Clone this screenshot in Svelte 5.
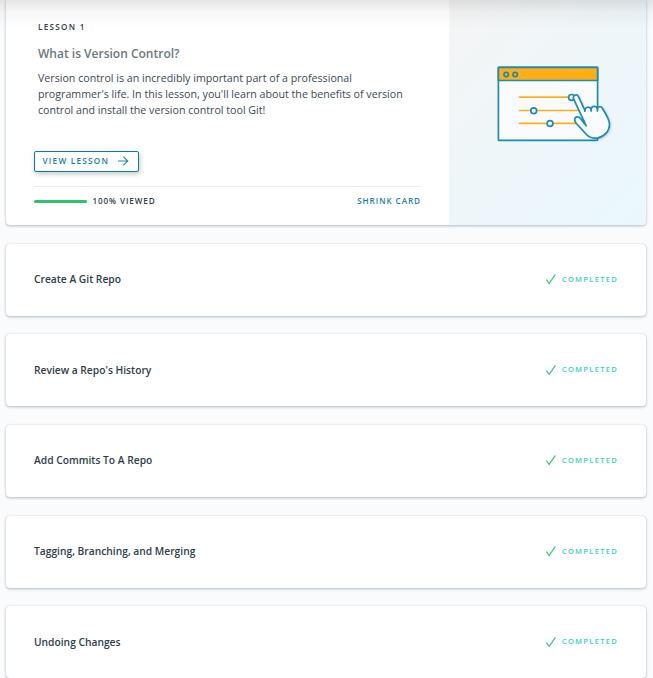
<script>
  const lessons = [
    'Create A Git Repo',
    "Review a Repo's History",
    'Add Commits To A Repo',
    'Tagging, Branching, and Merging',
    'Undoing Changes'
  ];
</script>

<main class="page">
  <article class="card lesson">
    <div class="content">
      <div class="eyebrow">LESSON 1</div>
      <h2>What is Version Control?</h2>
      <p>Version control is an incredibly important part of a professional programmer's life. In this lesson, you'll learn about the benefits of version control and install the version control tool Git!</p>
      <button class="view">
        <span>VIEW LESSON</span>
        <svg width="12" height="12" viewBox="0 0 12 12"><path d="M1 6H10.6M6.2 1.6L10.8 6L6.2 10.4" /></svg>
      </button>
      <footer>
        <span class="bar"></span>
        <span class="viewed">100% VIEWED</span>
        <span class="shrink">SHRINK CARD</span>
      </footer>
    </div>
    <div class="art">
      <svg width="140" height="95" viewBox="0 0 140 95" fill="none" stroke="#1d8caf" stroke-width="1.7" stroke-linecap="round" stroke-linejoin="round">
        <rect x="13.4" y="12.4" width="99.2" height="73" rx="1" fill="#fafbfd" />
        <path d="M13.4 25.5V12.4H112.6V25.5Z" fill="#ffae18" />
        <circle cx="21.2" cy="19.5" r="2.2" />
        <circle cx="30.2" cy="19.5" r="2.2" />
        <path d="M34.5 42.2H84M34.5 55.5H93M34.5 68.3H93" stroke="#ffae18" />
        <circle cx="48.7" cy="55.8" r="2.9" fill="#fafbfd" />
        <circle cx="65" cy="68.5" r="2.9" fill="#fafbfd" />
        <circle cx="86.5" cy="42.4" r="2.9" fill="#fafbfd" />
        <path class="hand" d="M101.2 70.8L96 64.2C94 61.5 91.5 61.2 90.2 63C89.4 64.4 90 66.5 91 68L101 79C104 82.2 108 83.7 112.5 83C119.5 81.6 124.5 76 124.5 69C124.2 63.5 120.5 58.5 117.4 53.2C115.8 50.8 112.5 51.3 112.4 54.2C111.7 50.5 106.5 50.5 106.2 54.3C104.8 51 100.2 51.8 99.9 55.3L93.6 41.8C92.2 38.7 87.8 39.8 88.4 43.3Z" fill="#fafbfd" />
        <path d="M99.9 55.3V56.2M106.2 54.3V56M112.4 54.2V56" />
      </svg>
    </div>
  </article>

  {#each lessons as title}
    <article class="card row">
      <h3>{title}</h3>
      <span class="status">
        <svg width="12" height="12" viewBox="0 0 12 12"><path d="M1.2 6.7L4.2 10.4L10.4 1.4" /></svg>
        <span class="label">COMPLETED</span>
      </span>
    </article>
  {/each}
  <div class="top-shade"></div>
</main>

<style>
  :global(body) { margin: 0; background: #fafbfd; }
  .page {
    position: relative;
    box-sizing: border-box;
    height: 678px;
    overflow: hidden;
    padding: 0 7px 0 6px;
    font-family: 'Open Sans', sans-serif;
    color: #2e3d49;
    display: flex;
    flex-direction: column;
    gap: 18.5px;
  }
  .card {
    flex: none;
    background: #fff;
    border-radius: 4px;
    box-shadow: 0 1px 3px rgba(46, 61, 73, 0.32), 0 0 1px rgba(46, 61, 73, 0.25);
  }
  .lesson {
    display: flex;
    height: 225px;
    border-radius: 0 0 4px 4px;
    overflow: hidden;
  }
  .content {
    box-sizing: border-box;
    width: 443px;
    padding: 20px 28px 0;
    display: flex;
    flex-direction: column;
  }
  .eyebrow {
    margin-left: 4px;
    font-size: 8.1px;
    line-height: 14px;
    font-weight: 600;
    letter-spacing: 1.3px;
  }
  h2 {
    margin: 11px 0 0 4px;
    font-size: 12px;
    line-height: 18px;
    font-weight: 600;
    color: #6d7780;
  }
  p {
    margin: 7px 0 0 4px;
    width: 372px;
    font-size: 10.66px;
    line-height: 16px;
    color: #3c4954;
  }
  .view {
    box-sizing: border-box;
    margin: 33px 0 0;
    width: 105px;
    height: 21px;
    padding: 0 9px 2px 7.5px;
    display: flex;
    align-items: center;
    justify-content: space-between;
    background: #fff;
    border: 1px solid #0f7c9d;
    border-radius: 2px;
    box-shadow: 1px 2px 5px rgba(46, 61, 73, 0.28);
    font: 600 8.2px/14px 'Open Sans', sans-serif;
    letter-spacing: 1.25px;
    color: #1b7f9f;
  }
  .view svg { fill: none; stroke: #2c89a7; stroke-width: 1.1; position: relative; top: 0.5px; }
  footer {
    display: flex;
    align-items: center;
    margin-top: 14px;
    width: 387px;
    height: 29px;
    border-top: 1px solid #e8ecf0;
    font-size: 8.1px;
    line-height: 12px;
    font-weight: 600;
    letter-spacing: 0.9px;
  }
  .bar {
    width: 53px;
    height: 3px;
    border-radius: 1.5px;
    background: #2dc26b;
  }
  .viewed { margin: 0 0 2px 5.5px; }
  .shrink { margin: 0 0 2px auto; letter-spacing: 0.95px; color: #1b7f9f; }
  .art {
    flex: 1;
    background: linear-gradient(135deg, #f5f5f5 0%, #eef6f9 50%, #eaf8fe 100%);
  }
  .art svg { display: block; margin: 55px 0 0 36px; }
  .hand { filter: drop-shadow(1px 1px 1px rgba(46, 61, 73, 0.2)); }
  .row {
    box-sizing: border-box;
    height: 72.2px;
    padding: 0 28px;
    display: flex;
    align-items: center;
    justify-content: space-between;
  }
  h3 {
    margin: 0 0 1px;
    font-size: 10.25px;
    line-height: 16px;
    font-weight: 600;
  }
  .status {
    display: flex;
    align-items: center;
    gap: 5px;
    margin-bottom: 1px;
    font-size: 7.6px;
    line-height: 12px;
    font-weight: 600;
    letter-spacing: 1.25px;
    color: #3dcfc3;
  }
  .status svg { fill: none; stroke: #3fc878; stroke-width: 1.2; }
  .label { margin-bottom: 1px; }
  .top-shade {
    position: absolute;
    inset: 0 0 auto;
    height: 28px;
    background: linear-gradient(rgba(0, 0, 0, 0.1), rgba(0, 0, 0, 0.035) 40%, rgba(0, 0, 0, 0));
  }
</style>
